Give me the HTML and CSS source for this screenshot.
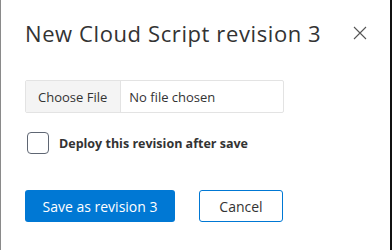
FILE: index.html
```html
<!DOCTYPE html>
<html lang="en">
<head>
    <meta charset="UTF-8">
    <title>New Cloud Script revision</title>
    <link rel="stylesheet" href="styles.css">
</head>
<body>
    <div class="modal">
        <div class="modal-header">
            <h2 class="modal-title">New Cloud Script revision 3</h2>
            <button class="close-btn" aria-label="Close">
                <svg width="14" height="14" viewBox="0 0 14 14">
                    <path d="M1 1 L13 13 M13 1 L1 13" stroke="#555" stroke-width="1.1" fill="none"/>
                </svg>
            </button>
        </div>

        <div class="file-field">
            <span class="file-btn">Choose File</span>
            <span class="file-name">No file chosen</span>
        </div>

        <label class="check-row">
            <span class="checkbox"></span>
            <span class="check-label">Deploy this revision after save</span>
        </label>

        <div class="actions">
            <button class="btn btn-primary">Save as revision 3</button>
            <button class="btn btn-default">Cancel</button>
        </div>
    </div>
</body>
</html>
```

FILE: styles.css
```css
body {
    margin: 0;
    background: #ffffff;
    font-family: 'Open Sans', 'Noto Sans', Arial, sans-serif;
    color: #333333;
}
.modal {
    box-sizing: border-box;
    width: 392px;
    height: 250px;
    border-left: 1px solid #8a8a8a;
    border-right: 2px solid #111111;
    padding: 0 0 0 24px;
}
.modal-header {
    display: flex;
    align-items: center;
    justify-content: space-between;
    padding: 17px 22px 0 0;
    height: 32px;
}
.modal-title {
    margin: 0;
    font-size: 22px;
    font-weight: 400;
    color: #333333;
    letter-spacing: 0.6px;
}
.close-btn {
    background: none;
    border: none;
    padding: 0;
    width: 16px;
    height: 16px;
    display: flex;
    align-items: center;
    justify-content: center;
    cursor: pointer;
}
.file-field {
    display: flex;
    width: 259px;
    height: 33px;
    margin-top: 31px;
    border: 1px solid #e3e3e3;
    border-radius: 2px;
    box-sizing: border-box;
    font-size: 13px;
    color: #333333;
}
.file-btn {
    display: flex;
    align-items: center;
    padding: 0 13px 0 12px;
    background: #f4f4f4;
    border-right: 1px solid #e3e3e3;
}
.file-name {
    display: flex;
    align-items: center;
    padding: 0 8px;
}
.check-row {
    display: flex;
    align-items: center;
    gap: 10px;
    margin-top: 19px;
    margin-left: 2px;
}
.checkbox {
    width: 20px;
    height: 20px;
    border: 1px solid #5f6673;
    border-radius: 4px;
}
.check-label {
    font-size: 12.5px;
    font-weight: 700;
    color: #333333;
}
.actions {
    display: flex;
    gap: 24px;
    margin-top: 36px;
}
.btn {
    height: 32px;
    border-radius: 3px;
    font-family: 'Open Sans', 'Noto Sans', Arial, sans-serif;
    font-size: 14px;
    cursor: pointer;
    box-sizing: border-box;
}
.btn-primary {
    width: 150px;
    background: #0078d4;
    border: none;
    color: #ffffff;
    font-weight: 500;
}
.btn-default {
    width: 84px;
    background: #ffffff;
    border: 1px solid #0078d4;
    color: #333333;
}
```
